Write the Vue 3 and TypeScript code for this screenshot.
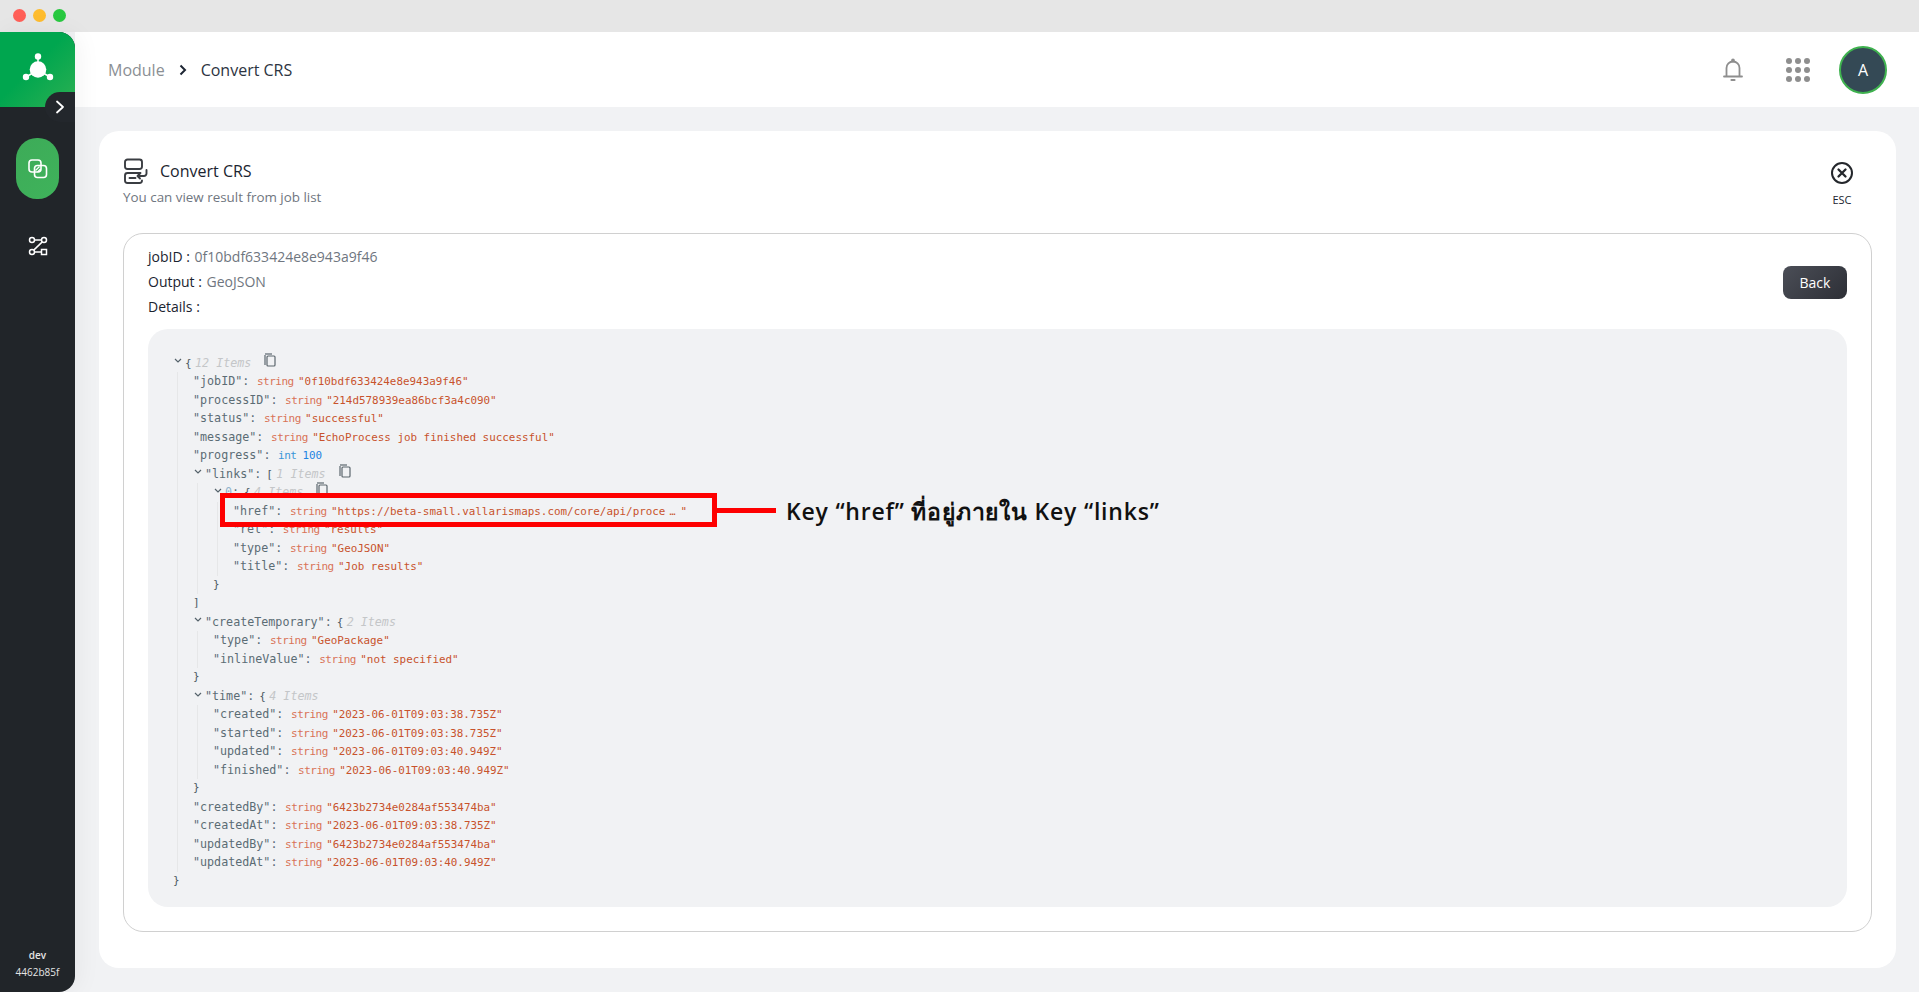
<script setup lang="ts">
interface Row {
  d: number
  key?: string
  type?: string
  val?: string
  tail?: boolean
  num?: boolean
  caret?: boolean
  open?: string
  count?: string
  copy?: boolean
  close?: string
}
const rows: Row[] = [
  { d: 0, caret: true, open: '{', count: '12 Items', copy: true },
  { d: 1, key: 'jobID', type: 'string', val: '"0f10bdf633424e8e943a9f46"' },
  { d: 1, key: 'processID', type: 'string', val: '"214d578939ea86bcf3a4c090"' },
  { d: 1, key: 'status', type: 'string', val: '"successful"' },
  { d: 1, key: 'message', type: 'string', val: '"EchoProcess job finished successful"' },
  { d: 1, key: 'progress', type: 'int', val: '100', num: true },
  { d: 1, caret: true, key: 'links', open: '[', count: '1 Items', copy: true },
  { d: 2, caret: true, key: '0', open: '{', count: '4 Items', copy: true },
  { d: 3, key: 'href', type: 'string', val: '"https://beta-small.vallarismaps.com/core/api/proce', tail: true },
  { d: 3, key: 'rel', type: 'string', val: '"results"' },
  { d: 3, key: 'type', type: 'string', val: '"GeoJSON"' },
  { d: 3, key: 'title', type: 'string', val: '"Job results"' },
  { d: 2, close: '}' },
  { d: 1, close: ']' },
  { d: 1, caret: true, key: 'createTemporary', open: '{', count: '2 Items' },
  { d: 2, key: 'type', type: 'string', val: '"GeoPackage"' },
  { d: 2, key: 'inlineValue', type: 'string', val: '"not specified"' },
  { d: 1, close: '}' },
  { d: 1, caret: true, key: 'time', open: '{', count: '4 Items' },
  { d: 2, key: 'created', type: 'string', val: '"2023-06-01T09:03:38.735Z"' },
  { d: 2, key: 'started', type: 'string', val: '"2023-06-01T09:03:38.735Z"' },
  { d: 2, key: 'updated', type: 'string', val: '"2023-06-01T09:03:40.949Z"' },
  { d: 2, key: 'finished', type: 'string', val: '"2023-06-01T09:03:40.949Z"' },
  { d: 1, close: '}' },
  { d: 1, key: 'createdBy', type: 'string', val: '"6423b2734e0284af553474ba"' },
  { d: 1, key: 'createdAt', type: 'string', val: '"2023-06-01T09:03:38.735Z"' },
  { d: 1, key: 'updatedBy', type: 'string', val: '"6423b2734e0284af553474ba"' },
  { d: 1, key: 'updatedAt', type: 'string', val: '"2023-06-01T09:03:40.949Z"' },
  { d: 0, close: '}' },
]
const label = (r: Row): string => (r.key === '0' ? '0' : `"${r.key}"`)
</script>

<template>
  <div class="app">
    <div class="titlebar">
      <span class="light red"></span>
      <span class="light yellow"></span>
      <span class="light green"></span>
    </div>
    <div class="body">
      <aside class="sidebar">
        <div class="brand">
          <svg width="36" height="36" viewBox="0 0 36 36">
            <g stroke="#fff" stroke-width="1.5"><path d="M18 6v12M18 18 6 25M18 18l12 7" /></g>
            <circle cx="18" cy="17.500" r="8.300" fill="#fff" />
            <circle cx="18" cy="4.500" r="3.200" fill="#fff" />
            <circle cx="6" cy="25" r="3.200" fill="#fff" />
            <circle cx="30" cy="25" r="3.200" fill="#fff" />
          </svg>
        </div>
        <button class="toggle" aria-label="expand">
          <svg width="10" height="14" viewBox="0 0 10 14" fill="none" stroke="#fff" stroke-width="1.800" stroke-linecap="round" stroke-linejoin="round"><path d="m2 1.500 6 5.500-6 5.500" /></svg>
        </button>
        <nav class="nav">
          <div class="nav-item active">
            <svg width="22" height="22" viewBox="0 0 22 22" fill="none" stroke="#fff" stroke-width="1.600">
              <rect x="2" y="2" width="12" height="12" rx="3" />
              <rect x="7.500" y="7.500" width="12" height="12" rx="3" />
              <path d="m8.500 12.500 4-4M10.500 14l3-3" stroke-width="1.200" />
            </svg>
          </div>
          <div class="nav-item">
            <svg width="20" height="20" viewBox="0 0 20 20" fill="none" stroke="#fff" stroke-width="1.500">
              <circle cx="4" cy="4" r="2.500" />
              <path d="M6.500 4H13.500" />
              <circle cx="16" cy="4" r="2.500" />
              <path d="M14.300 5.900 5.700 14.100" />
              <circle cx="4" cy="16" r="2.500" />
              <path d="M6.500 16H13.500" />
              <rect x="13.500" y="13.500" width="5" height="5" />
            </svg>
          </div>
        </nav>
        <div class="version">
          <strong>dev</strong>
          <span>4462b85f</span>
        </div>
      </aside>
      <div class="main">
        <header class="header">
          <span class="crumb-muted">Module</span>
          <svg class="crumb-sep" width="8" height="12" viewBox="0 0 8 12" fill="none" stroke="#1d2533" stroke-width="2"><path d="m1.500 1.500 4.500 4.500-4.500 4.500" /></svg>
          <span class="crumb">Convert CRS</span>
          <div class="header-tools">
            <svg width="24" height="26" viewBox="0 0 24 26" fill="none" stroke="#8e8e8e" stroke-width="1.800" stroke-linecap="round">
              <path d="M5.500 19V11a6.500 6.500 0 0 1 13 0v8" />
              <path d="M3 19.500h18" />
              <circle cx="12" cy="3.500" r="1" fill="#8e8e8e" />
              <path d="M10.500 23h3" stroke-width="2.200" />
            </svg>
            <div class="apps"><i v-for="n in 9" :key="n"></i></div>
            <div class="avatar">A</div>
          </div>
        </header>
        <main class="content">
          <section class="card">
            <div class="card-head">
              <div>
                <div class="title-row">
                  <svg width="25" height="26" viewBox="0 0 25 26" fill="none" stroke="#3a3d42" stroke-width="1.900" stroke-linecap="round" stroke-linejoin="round">
                    <rect x="2" y="1.500" width="17" height="9.500" rx="2.500" />
                    <path d="M17.500 15H4.500A2.500 2.500 0 0 0 2 17.500v5A2.500 2.500 0 0 0 4.500 25h12a2.500 2.500 0 0 0 2.500-2.500" />
                    <path d="M6.500 20h6" />
                    <path d="M23.500 12v3.500a2.500 2.500 0 0 1-2.500 2.500h-6.500M17 15.500 14.500 18l2.500 2.500" />
                  </svg>
                  <h1>Convert CRS</h1>
                </div>
                <p class="sub">You can view result from job list</p>
              </div>
              <div class="esc">
                <svg width="24" height="24" viewBox="0 0 24 24" fill="none" stroke="#24272c" stroke-width="2" stroke-linecap="round">
                  <circle cx="12" cy="12" r="10" />
                  <path d="m8.500 8.500 7 7M15.500 8.500l-7 7" stroke-width="2.300" />
                </svg>
                <span>ESC</span>
              </div>
            </div>
            <div class="result">
              <div class="meta-row">
                <div class="meta">
                  <div>jobID : <span>0f10bdf633424e8e943a9f46</span></div>
                  <div>Output : <span>GeoJSON</span></div>
                  <div>Details :</div>
                </div>
                <button class="back">Back</button>
              </div>
              <div class="json">
                <div v-for="(r, i) in rows" :key="i" class="row">
                  <span v-for="n in r.d" :key="n" class="indent"></span>
                  <span v-if="r.caret" class="caret">
                    <svg width="8" height="6" viewBox="0 0 8 6" fill="none" stroke="#55626b" stroke-width="1.200"><path d="m1 1 3 3 3-3" /></svg>
                  </span>
                  <span v-if="r.close" class="brace">{{ r.close }}</span>
                  <template v-else>
                    <span v-if="r.key" class="key" :class="{ idx: r.key === '0' }">{{ label(r) }}</span>
                    <span v-if="r.key" class="colon">:</span>
                    <template v-if="r.type">
                      <span class="type" :class="{ num: r.num }">{{ r.type }}</span>
                      <span class="val" :class="{ num: r.num }">{{ r.val }}</span>
                      <template v-if="r.tail">
                        <span class="ell">…</span>
                        <span class="val">"</span>
                      </template>
                    </template>
                    <template v-else>
                      <span class="brace open">{{ r.open }}</span>
                      <span class="count">{{ r.count }}</span>
                      <svg v-if="r.copy" class="copy" width="12" height="14" viewBox="0 0 12 14" fill="none" stroke="#5c666d" stroke-width="1.200">
                        <path d="M1 2v10" />
                        <path d="M1 1h7" />
                        <rect x="3" y="3" width="8" height="10" rx="1" />
                      </svg>
                    </template>
                  </template>
                </div>
              </div>
            </div>
          </section>
        </main>
      </div>
    </div>
    <div class="callout">
      <div class="callout-box"></div>
      <div class="callout-line"></div>
      <div class="callout-text">Key “href” ที่อยู่ภายใน Key “links”</div>
    </div>
  </div>
</template>

<style>
html, body { margin: 0; background: #f1f2f4; }
</style>

<style scoped>
.app {
  position: relative;
  width: 1919px;
  height: 992px;
  overflow: hidden;
  display: flex;
  flex-direction: column;
  font-family: "Open Sans", "Noto Sans", sans-serif;
  background: #f1f2f4;
  color: #1b2430;
}
.titlebar {
  height: 32px;
  flex: none;
  background: #e6e6e6;
  display: flex;
  align-items: center;
  gap: 7px;
  padding-left: 13px;
  padding-bottom: 2px;
  box-sizing: border-box;
}
.light { width: 13px; height: 13px; border-radius: 50%; }
.red { background: #ff5f57; }
.yellow { background: #febc2e; }
.green { background: #28c840; }
.body { flex: 1; display: flex; min-height: 0; }
.sidebar {
  position: relative;
  z-index: 2;
  width: 75px;
  flex: none;
  background: #212529;
  border-radius: 0 16px 16px 0;
  display: flex;
  flex-direction: column;
  box-shadow: 4px 0 24px rgba(0, 0, 0, 0.05);
}
.brand {
  height: 75px;
  flex: none;
  background: linear-gradient(135deg, #00a64f 45%, #2cb052);
  border-radius: 0 16px 0 0;
  display: flex;
  align-items: center;
  justify-content: center;
}
.toggle {
  position: absolute;
  top: 60px;
  right: 0;
  width: 30px;
  height: 30px;
  border: 0;
  padding: 0;
  border-radius: 15px 0 0 15px;
  background: #23272c;
  display: flex;
  align-items: center;
  justify-content: center;
}
.nav {
  display: flex;
  flex-direction: column;
  align-items: center;
  gap: 16px;
  padding-top: 31px;
}
.nav-item {
  width: 43px;
  height: 61px;
  border-radius: 21px;
  display: flex;
  align-items: center;
  justify-content: center;
}
.nav-item.active { background: linear-gradient(135deg, #3dab58, #3fb35b); }
.version {
  margin-top: auto;
  padding-bottom: 13px;
  display: flex;
  flex-direction: column;
  align-items: center;
  gap: 3px;
  color: #e4e4e4;
  font-size: 10px;
  line-height: 14px;
}
.version strong { font-weight: 600; margin-top: -1px; }
.main { flex: 1; min-width: 0; display: flex; flex-direction: column; }
.header {
  height: 75px;
  flex: none;
  background: #fff;
  display: flex;
  align-items: center;
  padding: 0 32px 0 33px;
  font-size: 16px;
}
.crumb-muted { color: #8b8f94; }
.crumb-sep { margin: 0 14px 0 14px; }
.crumb { color: #2c3441; }
.header-tools { margin-left: auto; display: flex; align-items: center; }
.apps {
  margin-left: 41px;
  width: 24px;
  display: grid;
  grid-template-columns: repeat(3, 6px);
  gap: 3px;
}
.apps i { width: 6px; height: 6px; border-radius: 50%; background: #8e8e8e; }
.avatar {
  margin-left: 29px;
  width: 48px;
  height: 48px;
  box-sizing: border-box;
  border: 2px solid #3fb24f;
  border-radius: 50%;
  background: #344955;
  color: #fff;
  font-size: 16px;
  display: flex;
  align-items: center;
  justify-content: center;
}
.content {
  flex: 1;
  min-height: 0;
  padding: 24px 23px 24px 24px;
  display: flex;
}
.card {
  flex: 1;
  min-width: 0;
  background: #fff;
  border-radius: 20px;
  padding: 24px 24px 36px;
  display: flex;
  flex-direction: column;
}
.card-head {
  height: 78px;
  flex: none;
  display: flex;
  justify-content: space-between;
}
.title-row { display: flex; align-items: center; gap: 12px; height: 32px; }
.title-row h1 { margin: 0; font-size: 16px; font-weight: 400; color: #1b2430; }
.sub { margin: 1px 0 0; font-size: 13.4px; line-height: 18px; color: #6f7680; }
.esc {
  display: flex;
  flex-direction: column;
  align-items: center;
  gap: 8px;
  margin-right: 18px;
  padding-top: 6px;
  font-size: 11px;
  line-height: 14px;
  color: #1b2430;
}
.result {
  flex: 1;
  min-height: 0;
  box-sizing: border-box;
  border: 1px solid #d0d0d0;
  border-radius: 20px;
  padding: 11px 24px 24px;
  display: flex;
  flex-direction: column;
}
.meta-row { display: flex; justify-content: space-between; align-items: center; height: 84px; flex: none; }
.meta { font-size: 14px; line-height: 25px; margin-top: -1px; align-self: flex-start; }
.meta span { color: #6f7680; margin-left: 1px; }
.back {
  width: 64px;
  height: 33px;
  border: 0;
  border-radius: 8px;
  background: linear-gradient(135deg, #4b4e57, #2d2f36);
  color: #fff;
  font: 14px "Open Sans", sans-serif;
  margin-top: -9px;
}
.json {
  flex: 1;
  min-height: 0;
  background: #f1f2f4;
  border-radius: 20px;
  padding: 24.5px 25px 0;
  font-family: "DejaVu Sans Mono", monospace;
  font-size: 11px;
}
.row {
  display: flex;
  align-items: baseline;
  height: 18.52px;
  line-height: 18.52px;
  white-space: pre;
}
.indent { width: 20px; flex: none; position: relative; align-self: stretch; }
.indent::before {
  content: "";
  position: absolute;
  left: 4px;
  top: 0;
  bottom: 0;
  border-left: 1px solid #e6e7e8;
}
.caret { width: 12px; flex: none; display: flex; align-items: center; align-self: stretch; }
.caret svg { margin-top: -3px; margin-left: 1px; }
.key { color: #5b6c74; font-size: 11.7px; }
.key.idx { color: #8fb3cc; }
.colon { color: #5b6c74; font-size: 11.7px; margin-right: 7.6px; }
.caret ~ .colon { margin-right: 5px; }
.type { color: #d97257; font-size: 11px; letter-spacing: -0.48px; margin-right: 4.3px; }
.val { color: #c8522c; font-size: 10.9px; }
.type.num { color: #3a96d8; margin-right: 6px; }
.val.num { color: #1d83e2; }
.ell { color: #c8522c; font-size: 10px; margin: 0 5px 0 4px; }
.brace { color: #4d5a63; }
.brace.open { margin-right: 3.4px; }
.count { color: #c4c6c8; font-style: italic; font-size: 11.7px; }
.copy { margin: 0 0 0 13px; align-self: flex-start; margin-top: -1px; }
.callout { position: absolute; left: 220px; top: 493px; display: flex; align-items: center; }
.callout-box { width: 497px; height: 34px; box-sizing: border-box; border: 5px solid #fe0000; }
.callout-line { width: 59px; height: 5px; background: #fe0000; }
.callout-text {
  margin-left: 10px;
  margin-top: 1px;
  font-size: 23px;
  line-height: 30px;
  font-weight: 600;
  letter-spacing: 0.8px;
  color: #111;
  white-space: nowrap;
}
</style>
